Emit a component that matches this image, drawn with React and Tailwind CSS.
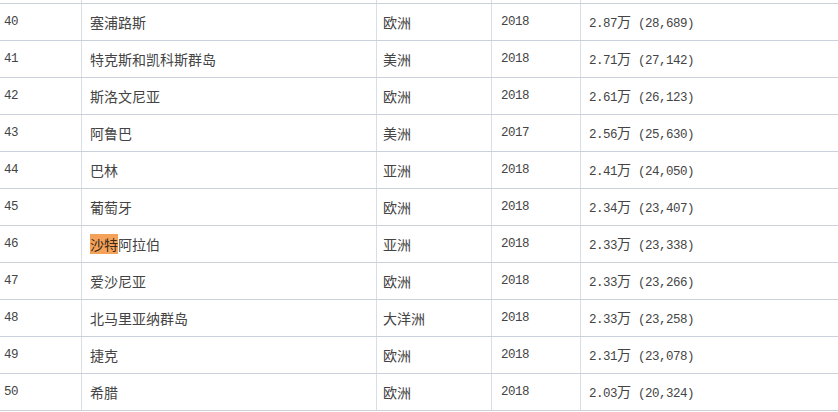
import React from "react";

const rows = [
  ["40", "塞浦路斯", "欧洲", "2018", "2.87", "28,689"],
  ["41", "特克斯和凯科斯群岛", "美洲", "2018", "2.71", "27,142"],
  ["42", "斯洛文尼亚", "欧洲", "2018", "2.61", "26,123"],
  ["43", "阿鲁巴", "美洲", "2017", "2.56", "25,630"],
  ["44", "巴林", "亚洲", "2018", "2.41", "24,050"],
  ["45", "葡萄牙", "欧洲", "2018", "2.34", "23,407"],
  ["46", "沙特阿拉伯", "亚洲", "2018", "2.33", "23,338"],
  ["47", "爱沙尼亚", "欧洲", "2018", "2.33", "23,266"],
  ["48", "北马里亚纳群岛", "大洋洲", "2018", "2.33", "23,258"],
  ["49", "捷克", "欧洲", "2018", "2.31", "23,078"],
  ["50", "希腊", "欧洲", "2018", "2.03", "20,324"],
];

const Mono = ({ children }) => (
  <span className="font-['Liberation_Mono',monospace] text-[12.5px] tracking-[-0.5px]">{children}</span>
);

const cjk = "font-['Noto_Sans_CJK_SC','Noto_Sans',sans-serif] text-[14px]";

function Row({ r }) {
  const [n, name, cont, year, wan, full] = r;
  return (
    <div className="flex h-[37px] border-b border-[#c9d2db] text-[#444]">
      <div className="w-[82px] shrink-0 flex items-center pl-[4px] border-r border-[#d8dee5]">
        <Mono>{n}</Mono>
      </div>
      <div className={`w-[295px] shrink-0 flex items-center pl-[8px] border-r border-[#d8dee5] ${cjk}`}>
        {name === "沙特阿拉伯" ? (
          <span>
            <span className="bg-[#f4a259] text-[#3a2a1a]">沙特</span>阿拉伯
          </span>
        ) : (
          name
        )}
      </div>
      <div className={`w-[115px] shrink-0 flex items-center pl-[6px] border-r border-[#d8dee5] ${cjk}`}>
        {cont}
      </div>
      <div className="w-[89px] shrink-0 flex items-center pl-[9px] border-r border-[#d8dee5]">
        <Mono>{year}</Mono>
      </div>
      <div className="flex-1 flex items-center pl-[8px]">
        <span className="leading-none">
          <Mono>{wan}</Mono>
          <span className={cjk}>万</span>
          <Mono>&nbsp;({full})</Mono>
        </span>
      </div>
    </div>
  );
}

export default function App() {
  return (
    <div className="w-[838px] h-[412px] bg-white overflow-hidden">
      <div className="flex h-[4px] border-b border-[#c9d2db]">
        <div className="w-[82px] shrink-0 border-r border-[#d8dee5]" />
        <div className="w-[295px] shrink-0 border-r border-[#d8dee5]" />
        <div className="w-[115px] shrink-0 border-r border-[#d8dee5]" />
        <div className="w-[89px] shrink-0 border-r border-[#d8dee5]" />
        <div className="flex-1" />
      </div>
      {rows.map((r) => (
        <Row key={r[0]} r={r} />
      ))}
    </div>
  );
}
